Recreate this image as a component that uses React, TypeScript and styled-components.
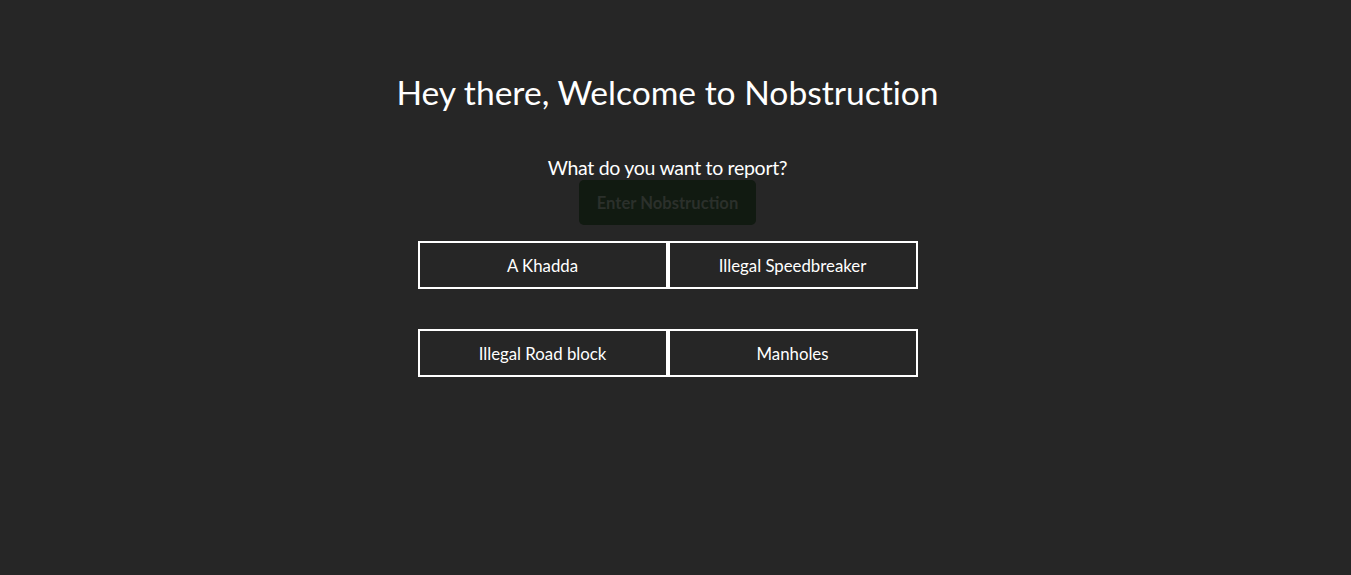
import React from "react";
import styled, { createGlobalStyle } from "styled-components";

const Global = createGlobalStyle`
  html, body { margin: 0; padding: 0; background: #262626; }
  body {
    font-family: Lato, "Noto Sans", sans-serif;
    color: #ffffff;
    font-variant-ligatures: none;
  }
`;

const Page = styled.main`
  box-sizing: border-box;
  min-height: 575px;
  width: 1335px;
  display: flex;
  flex-direction: column;
  align-items: center;
  padding-top: 70px;
`;

const Title = styled.h1`
  margin: 0;
  font-size: 33.6px;
  font-weight: 400;
  line-height: 44px;
  letter-spacing: 0;
`;

const Subtitle = styled.p`
  margin: 41px 0 0;
  font-size: 19.5px;
  line-height: 25px;
  letter-spacing: -0.3px;
`;

const Submit = styled.button`
  width: 177px;
  height: 45px;
  border: none;
  border-radius: 5px;
  background: #111a11;
  color: #2b302b;
  font-family: inherit;
  font-size: 16.6px;
  font-weight: 700;
  cursor: default;
`;

const Grid = styled.div`
  margin-top: 16px;
  display: grid;
  grid-template-columns: 250px 250px;
  column-gap: 0;
  row-gap: 40px;
`;

const Choice = styled.button`
  box-sizing: border-box;
  height: 48px;
  border: 2px solid #ffffff;
  background: transparent;
  color: #ffffff;
  font-family: inherit;
  font-size: 16.8px;
  font-weight: 400;
  cursor: pointer;
`;

const options = ["A Khadda", "Illegal Speedbreaker", "Illegal Road block", "Manholes"];

export default function App() {
  return (
    <>
      <Global />
      <Page>
        <Title>Hey there, Welcome to Nobstruction</Title>
        <Subtitle>What do you want to report?</Subtitle>
        <Submit disabled>Enter Nobstruction</Submit>
        <Grid>
          {options.map((o) => (
            <Choice key={o}>{o}</Choice>
          ))}
        </Grid>
      </Page>
    </>
  );
}
